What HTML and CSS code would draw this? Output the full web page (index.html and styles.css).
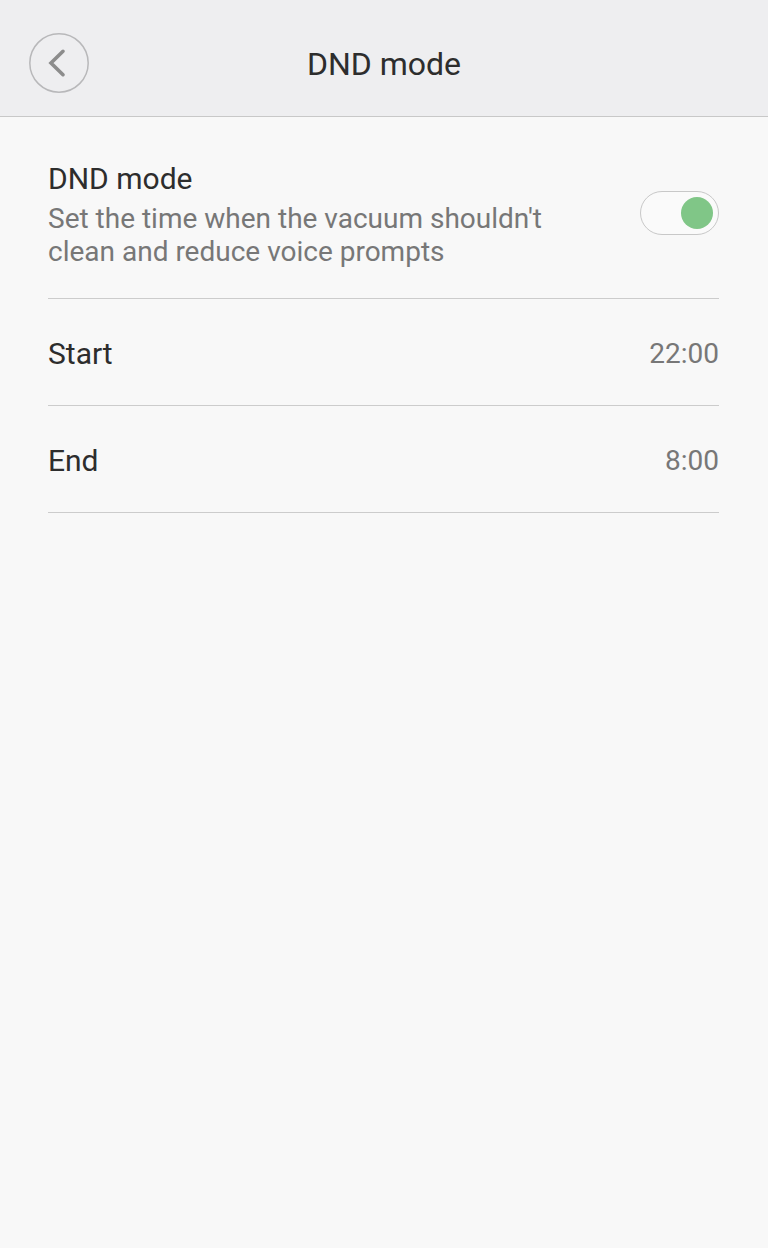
FILE: index.html
```html
<!doctype html>
<html lang="en">
  <head>
    <meta charset="utf-8">
    <meta name="viewport" content="width=device-width, initial-scale=1.0">
    <title>DND mode</title>
    <link rel="stylesheet" href="styles.css">
  </head>
  <body>
    <header class="title-bar">
      <button class="back" type="button" aria-label="Back">
        <svg viewBox="0 0 60 60" aria-hidden="true">
          <circle class="ring" cx="30" cy="30" r="29.2"/>
          <path class="chevron" d="M34 18.3 L22 30 L34 41.7"/>
        </svg>
      </button>
      <h1>DND mode</h1>
    </header>
    <main class="settings">
      <div class="setting setting-toggle">
        <label for="dnd">
          <span class="name">DND mode</span>
          <span class="description">Set the time when the vacuum shouldn't clean and reduce voice prompts</span>
        </label>
        <input class="switch" id="dnd" type="checkbox" role="switch" checked>
      </div>
      <button class="setting" type="button">
        <span class="name">Start</span>
        <span class="value">22:00</span>
      </button>
      <button class="setting" type="button">
        <span class="name">End</span>
        <span class="value">8:00</span>
      </button>
    </main>
  </body>
</html>
```

FILE: styles.css
```css
* {
  box-sizing: border-box;
}
body {
  background: #f8f8f8;
  color: #2d2d2d;
  font-family: Roboto, sans-serif;
  margin: 0;
}
button {
  /* reset */
  appearance: none;
  background: none;
  border: none;
  color: inherit;
  cursor: pointer;
  font: inherit;
  margin: 0;
  padding: 0;
}
.title-bar {
  align-items: center;
  background: #eeeef0;
  border-bottom: solid 1px #c8c8c8;
  display: grid;
  grid-template-columns: 60px 1fr 60px;
  padding: 33px 29px 23px;
}
.title-bar h1 {
  font-size: 32px;
  font-weight: 400;
  line-height: 40px;
  margin: 0;
  padding-top: 2px;
  text-align: center;
}
.back {
  border-radius: 50%;
  height: 60px;
  width: 60px;
}
.back svg {
  display: block;
  fill: none;
}
.ring {
  stroke: #b8b8ba;
  stroke-width: 1.5;
}
.chevron {
  stroke: #8c8c8c;
  stroke-linecap: round;
  stroke-width: 3.6;
}
.settings {
  padding: 0 49px 0 48px;
}
.setting {
  align-items: center;
  border-bottom: solid 1px #cccccc;
  display: flex;
  justify-content: space-between;
  padding: 34px 0 30px;
  text-align: left;
  width: 100%;
}
.setting-toggle {
  padding: 41px 0 30px;
}
.setting-toggle label {
  max-width: 520px;
}
.name {
  display: block;
  font-size: 30px;
  line-height: 42px;
}
.description {
  color: #777777;
  display: block;
  font-size: 28px;
  line-height: 33px;
  padding-top: 2px;
}
.value {
  color: #777777;
  font-size: 28px;
  line-height: 42px;
}
.switch {
  appearance: none;
  background: #fafafa;
  border: solid 1px #c8c8c8;
  border-radius: 22px;
  cursor: pointer;
  display: flex;
  flex: none;
  height: 44px;
  margin: 0;
  padding: 5px;
  width: 79px;
}
.switch::before {
  background: #bbbbbb;
  border-radius: 50%;
  content: "";
  height: 32px;
  width: 32px;
}
.switch:checked {
  justify-content: flex-end;
}
.switch:checked::before {
  background: #80c687;
}
```
